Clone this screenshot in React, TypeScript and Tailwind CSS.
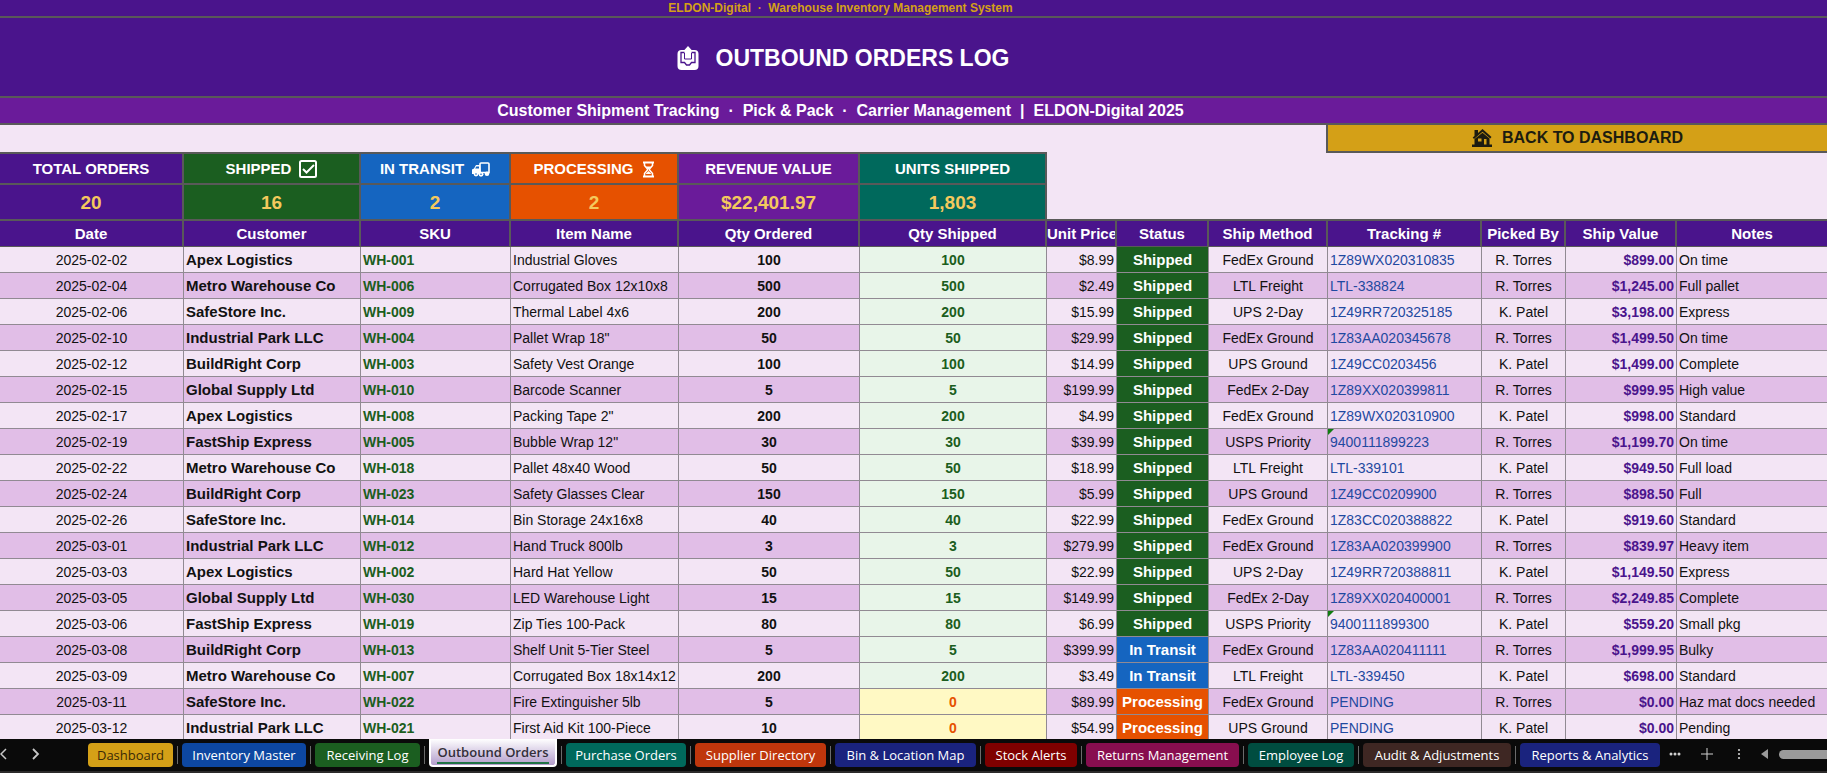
import type { ReactNode } from 'react';

type Order = [string, string, string, string, string, string, string, string, string, string, string, string, string];

const orders: Order[] = [
  ['2025-02-02', 'Apex Logistics', 'WH-001', 'Industrial Gloves', '100', '100', '$8.99', 'Shipped', 'FedEx Ground', '1Z89WX020310835', 'R. Torres', '$899.00', 'On time'],
  ['2025-02-04', 'Metro Warehouse Co', 'WH-006', 'Corrugated Box 12x10x8', '500', '500', '$2.49', 'Shipped', 'LTL Freight', 'LTL-338824', 'R. Torres', '$1,245.00', 'Full pallet'],
  ['2025-02-06', 'SafeStore Inc.', 'WH-009', 'Thermal Label 4x6', '200', '200', '$15.99', 'Shipped', 'UPS 2-Day', '1Z49RR720325185', 'K. Patel', '$3,198.00', 'Express'],
  ['2025-02-10', 'Industrial Park LLC', 'WH-004', 'Pallet Wrap 18"', '50', '50', '$29.99', 'Shipped', 'FedEx Ground', '1Z83AA020345678', 'R. Torres', '$1,499.50', 'On time'],
  ['2025-02-12', 'BuildRight Corp', 'WH-003', 'Safety Vest Orange', '100', '100', '$14.99', 'Shipped', 'UPS Ground', '1Z49CC0203456', 'K. Patel', '$1,499.00', 'Complete'],
  ['2025-02-15', 'Global Supply Ltd', 'WH-010', 'Barcode Scanner', '5', '5', '$199.99', 'Shipped', 'FedEx 2-Day', '1Z89XX020399811', 'R. Torres', '$999.95', 'High value'],
  ['2025-02-17', 'Apex Logistics', 'WH-008', 'Packing Tape 2"', '200', '200', '$4.99', 'Shipped', 'FedEx Ground', '1Z89WX020310900', 'K. Patel', '$998.00', 'Standard'],
  ['2025-02-19', 'FastShip Express', 'WH-005', 'Bubble Wrap 12"', '30', '30', '$39.99', 'Shipped', 'USPS Priority', '9400111899223', 'R. Torres', '$1,199.70', 'On time'],
  ['2025-02-22', 'Metro Warehouse Co', 'WH-018', 'Pallet 48x40 Wood', '50', '50', '$18.99', 'Shipped', 'LTL Freight', 'LTL-339101', 'K. Patel', '$949.50', 'Full load'],
  ['2025-02-24', 'BuildRight Corp', 'WH-023', 'Safety Glasses Clear', '150', '150', '$5.99', 'Shipped', 'UPS Ground', '1Z49CC0209900', 'R. Torres', '$898.50', 'Full'],
  ['2025-02-26', 'SafeStore Inc.', 'WH-014', 'Bin Storage 24x16x8', '40', '40', '$22.99', 'Shipped', 'FedEx Ground', '1Z83CC020388822', 'K. Patel', '$919.60', 'Standard'],
  ['2025-03-01', 'Industrial Park LLC', 'WH-012', 'Hand Truck 800lb', '3', '3', '$279.99', 'Shipped', 'FedEx Ground', '1Z83AA020399900', 'R. Torres', '$839.97', 'Heavy item'],
  ['2025-03-03', 'Apex Logistics', 'WH-002', 'Hard Hat Yellow', '50', '50', '$22.99', 'Shipped', 'UPS 2-Day', '1Z49RR720388811', 'K. Patel', '$1,149.50', 'Express'],
  ['2025-03-05', 'Global Supply Ltd', 'WH-030', 'LED Warehouse Light', '15', '15', '$149.99', 'Shipped', 'FedEx 2-Day', '1Z89XX020400001', 'R. Torres', '$2,249.85', 'Complete'],
  ['2025-03-06', 'FastShip Express', 'WH-019', 'Zip Ties 100-Pack', '80', '80', '$6.99', 'Shipped', 'USPS Priority', '9400111899300', 'K. Patel', '$559.20', 'Small pkg'],
  ['2025-03-08', 'BuildRight Corp', 'WH-013', 'Shelf Unit 5-Tier Steel', '5', '5', '$399.99', 'In Transit', 'FedEx Ground', '1Z83AA020411111', 'R. Torres', '$1,999.95', 'Bulky'],
  ['2025-03-09', 'Metro Warehouse Co', 'WH-007', 'Corrugated Box 18x14x12', '200', '200', '$3.49', 'In Transit', 'LTL Freight', 'LTL-339450', 'K. Patel', '$698.00', 'Standard'],
  ['2025-03-11', 'SafeStore Inc.', 'WH-022', 'Fire Extinguisher 5lb', '5', '0', '$89.99', 'Processing', 'FedEx Ground', 'PENDING', 'R. Torres', '$0.00', 'Haz mat docs needed'],
  ['2025-03-12', 'Industrial Park LLC', 'WH-021', 'First Aid Kit 100-Piece', '10', '0', '$54.99', 'Processing', 'UPS Ground', 'PENDING', 'K. Patel', '$0.00', 'Pending'],
];

const headers = ['Date', 'Customer', 'SKU', 'Item Name', 'Qty Ordered', 'Qty Shipped', 'Unit Price', 'Status', 'Ship Method', 'Tracking #', 'Picked By', 'Ship Value', 'Notes'];

const columnWidths = ['w-[184px]', 'w-[177px]', 'w-[150px]', 'w-[168px]', 'w-[181px]', 'w-[187px]', 'w-[70px]', 'w-[92px]', 'w-[119px]', 'w-[154px]', 'w-[84px]', 'w-[111px]', ''];

const cellStyles = [
  'text-center text-sm',
  'text-[15px] font-bold',
  'text-sm font-bold text-[#1b5e20]',
  'text-sm',
  'text-center text-sm font-bold',
  'text-center text-sm font-bold',
  'text-right text-sm',
  'text-center text-[15px] font-bold text-white',
  'text-center text-sm',
  'text-sm text-[#1f49a0]',
  'text-center text-sm',
  'text-right text-sm font-bold text-[#4a148c]',
  'text-sm',
];

const statusColors: Record<string, string> = {
  Shipped: 'bg-[#1b5e20]',
  'In Transit': 'bg-[#1565c0]',
  Processing: 'bg-[#e65100]',
};

function OutboxIcon() {
  return (
    <svg viewBox="0 0 24 26" className="h-[26px] w-6" aria-hidden="true">
      <rect x="1.500" y="5" width="21" height="20" rx="4" fill="#fff" />
      <path d="M8.500 7.500H5V17.500h3.500l2 2.500h3l2-2.500H19V7.500h-3.500" fill="none" stroke="#4a148c" strokeWidth="1.300" />
      <path d="M12 1l4.500 5h-2.300V12H9.800V6H7.500z" fill="#fff" />
      <path d="M8.500 8v6h7V8" fill="none" stroke="#4a148c" strokeWidth="1" />
    </svg>
  );
}

function CheckIcon() {
  return (
    <svg viewBox="0 0 18 18" className="h-[18px] w-[18px]" fill="none" stroke="#fff" strokeWidth="2" aria-hidden="true">
      <rect x="1" y="1" width="16" height="16" rx="1.500" />
      <path d="M4 9l3.500 3.500L15 5" />
    </svg>
  );
}

function TruckIcon() {
  return (
    <svg viewBox="0 0 18 15" className="h-[15px] w-[18px]" aria-hidden="true">
      <path d="M8 1.800Q8 1 9 1h7q1 0 1 1v8.500H8z" fill="none" stroke="#fff" strokeWidth="1.600" />
      <path d="M8 3H4L2 6.500 0 7.500v4.500h9z" fill="#fff" />
      <path d="M4.300 4.600H7v2H3.200z" fill="#1565c0" />
      <circle cx="4" cy="12" r="2.400" fill="#fff" />
      <circle cx="9" cy="12.300" r="2.400" fill="#fff" />
      <circle cx="15" cy="11.800" r="2.300" fill="#fff" />
      <circle cx="4" cy="12" r=".8" fill="#1565c0" />
      <circle cx="9" cy="12.300" r=".8" fill="#1565c0" />
    </svg>
  );
}

function HourglassIcon() {
  return (
    <svg viewBox="0 0 13 17" className="h-[17px] w-[13px]" aria-hidden="true">
      <path d="M1 1.500h11M1 15.500h11" stroke="#fff" strokeWidth="2" />
      <path d="M2.500 1v3.500L5.500 8v1L2.500 12.500V16M10.500 1v3.500L7.500 8v1l3 3.500V16" fill="none" stroke="#fff" strokeWidth="1.500" />
      <path d="M4 5.500h5L6.500 8.500zM6.500 10L9 12.500V13H4v-.5z" fill="#fff" />
    </svg>
  );
}

function HouseIcon() {
  return (
    <svg viewBox="0 0 20 18" className="h-[18px] w-5" fill="#1c1c10" aria-hidden="true">
      <path d="M2.500 1h3.500v3L10.500 0 19.500 8l-1.300 1.400L10.500 2.800 2 10 .7 8.600l1.800-1.600z" />
      <path fillRule="evenodd" d="M2.500 10L10.500 3.800 17.500 9.500V15.500H20V18H0v-2.500h2.500zM6 9.500v3h3.500v-3zM12 10v5.500h2.500V10z" />
    </svg>
  );
}

type Metric = { label: string; value: string; color: string; width: string; icon?: ReactNode };

const metrics: Metric[] = [
  { label: 'TOTAL ORDERS', value: '20', color: 'bg-[#4a148c]', width: 'w-[184px]' },
  { label: 'SHIPPED', value: '16', color: 'bg-[#1b5e20]', width: 'w-[177px]', icon: <CheckIcon /> },
  { label: 'IN TRANSIT', value: '2', color: 'bg-[#1565c0]', width: 'w-[150px]', icon: <TruckIcon /> },
  { label: 'PROCESSING', value: '2', color: 'bg-[#e65100]', width: 'w-[168px]', icon: <HourglassIcon /> },
  { label: 'REVENUE VALUE', value: '$22,401.97', color: 'bg-[#6a1b9a]', width: 'w-[181px]' },
  { label: 'UNITS SHIPPED', value: '1,803', color: 'bg-[#00695c]', width: 'w-[187px]' },
];

const tabs = [
  { name: 'Dashboard', style: 'w-[85px] bg-[#d4a017] text-[#3b2a06]' },
  { name: 'Inventory Master', style: 'w-[124px] bg-[#0d47a1] text-white' },
  { name: 'Receiving Log', style: 'w-[105px] bg-[#1b5e20] text-white' },
  { name: 'Outbound Orders', style: 'w-[128px]' },
  { name: 'Purchase Orders', style: 'w-[120px] bg-[#00695c] text-white' },
  { name: 'Supplier Directory', style: 'w-[131px] bg-[#bf360c] text-white' },
  { name: 'Bin & Location Map', style: 'w-[141px] bg-[#1a237e] text-white' },
  { name: 'Stock Alerts', style: 'w-[92px] bg-[#7f0000] text-white' },
  { name: 'Returns Management', style: 'w-[153px] bg-[#880e4f] text-white' },
  { name: 'Employee Log', style: 'w-[106px] bg-[#004d40] text-white' },
  { name: 'Audit & Adjustments', style: 'w-[148px] bg-[#3e2723] text-white' },
  { name: 'Reports & Analytics', style: 'w-[140px] bg-[#1a237e] text-white' },
];

function cellBackground(order: Order, column: number, striped: boolean) {
  if (column === 5) return order[5] === '0' ? 'bg-[#fff9c4] text-[#e65100]' : 'bg-[#e8f5e9] text-[#1b5e20]';
  if (column === 7) return statusColors[order[7]];
  return striped ? 'bg-[#e1bee7]' : 'bg-[#f3e5f5]';
}

function SheetTabs() {
  return (
    <nav aria-label="Sheets" className="flex h-[34px] shrink-0 items-start overflow-hidden border-b-2 border-[#2c2a2a] bg-[#0a0a0a] font-['Open_Sans','Noto_Sans',sans-serif] text-[13px]">
      <div className="flex h-[30px] w-[88px] shrink-0 items-center gap-6 text-[#c8c8c8]">
        <button aria-label="Previous sheet" className="w-2">
          <svg viewBox="0 0 8 12" className="h-3 w-2" fill="none" stroke="currentColor" strokeWidth="1.500"><path d="M6 1L1 6l5 5" /></svg>
        </button>
        <button aria-label="Next sheet" className="w-2">
          <svg viewBox="0 0 8 12" className="h-3 w-2" fill="none" stroke="currentColor" strokeWidth="1.800"><path d="M1 1l5 5-5 5" /></svg>
        </button>
      </div>
      {tabs.map((tab, i) => (
        <div key={tab.name} className="flex shrink-0 items-start">
          {i > 0 && <span className="mx-1 mt-[7px] h-[18px] w-px bg-[#6b6b6b]" />}
          {tab.name === 'Outbound Orders' ? (
            <button aria-current="page" className={`${tab.style} flex h-7 items-start justify-center rounded-b border-2 border-t-0 border-white bg-linear-to-b from-white to-[#b39dcb] pt-[3px] font-semibold text-[#33303a]`}>
              <span className="border-b-2 border-[#217346] leading-5 whitespace-nowrap">{tab.name}</span>
            </button>
          ) : (
            <button className={`${tab.style} mt-1 h-6 rounded text-center leading-6 whitespace-nowrap`}>{tab.name}</button>
          )}
        </div>
      ))}
      <div className="flex h-[30px] min-w-0 flex-1 items-center pl-[9px] text-[#d0d0d0]">
        <button aria-label="More sheets" className="w-3">
          <svg viewBox="0 0 12 4" className="h-1 w-3" fill="currentColor"><circle cx="2" cy="2" r="1.500" /><circle cx="6" cy="2" r="1.500" /><circle cx="10" cy="2" r="1.500" /></svg>
        </button>
        <button aria-label="New sheet" className="ml-5 w-3">
          <svg viewBox="0 0 12 12" className="size-3" stroke="currentColor"><path d="M6 0v12M0 6h12" /></svg>
        </button>
        <button aria-label="Sheet options" className="ml-6 w-1">
          <svg viewBox="0 0 4 12" className="h-3 w-1" fill="currentColor"><circle cx="2" cy="2" r="1.100" /><circle cx="2" cy="6" r="1.100" /><circle cx="2" cy="10" r="1.100" /></svg>
        </button>
        <button aria-label="Scroll left" className="ml-5 w-2">
          <svg viewBox="0 0 8 10" className="h-2.5 w-2" fill="#9a9a9a"><path d="M7 0v10L0 5z" /></svg>
        </button>
        <div className="ml-2.5 h-[9px] flex-1 rounded-l-full bg-[#9a9a9a]" />
      </div>
    </nav>
  );
}

export default function App() {
  return (
    <div className="flex h-screen flex-col overflow-hidden bg-[#f3e5f5] font-['Liberation_Sans',Arial,sans-serif] text-[#111]">
      <main className="min-h-0 flex-1 overflow-hidden">
        <header className="text-center font-bold text-white">
          <p className="h-[18px] border-b-2 border-[#595959] bg-[#4a148c] pr-[146px] text-xs leading-4 whitespace-pre text-[#d4a017]">ELDON-Digital  ·  Warehouse Inventory Management System</p>
          <h1 className="flex h-20 items-center justify-center gap-4 border-b-2 border-[#595959] bg-[#4a148c] pt-[2px] pr-[142px] text-[23px]">
            <OutboxIcon />
            OUTBOUND ORDERS LOG
          </h1>
          <p className="h-[27px] border-b-2 border-[#595959] bg-[#6a1b9a] pr-[146px] text-base leading-[26px] whitespace-pre">Customer Shipment Tracking  ·  Pick &amp; Pack  ·  Carrier Management  |  ELDON-Digital 2025</p>
        </header>
        <section className="flex h-[94px] items-start justify-between" aria-label="Summary">
          <dl className="mt-[27px] flex shrink-0 border-t-2 border-[#595959] text-center font-bold">
            {metrics.map((metric) => (
              <div key={metric.label} className={`${metric.width} ${metric.color} border-r-2 border-[#595959]`}>
                <dt className="flex h-[31px] items-center justify-center gap-2 border-b-2 border-[#595959] pt-px text-[15px] text-white">
                  {metric.label}
                  {metric.icon}
                </dt>
                <dd className="h-[34px] text-[19px] leading-[35px] text-[#f4c95d]">{metric.value}</dd>
              </div>
            ))}
          </dl>
          <a href="#dashboard" className="flex h-7 w-[501px] items-center justify-center gap-2.5 border-b-2 border-l-2 border-[#595959] bg-[#d4a017] text-base font-bold text-[#1c1c10]">
            <HouseIcon />
            BACK TO DASHBOARD
          </a>
        </section>
        <table className="w-full table-fixed border-separate border-spacing-0">
          <colgroup>
            {columnWidths.map((width, i) => <col key={i} className={width} />)}
          </colgroup>
          <thead>
            <tr>
              {headers.map((header, i) => (
                <th key={header} className={`h-7 overflow-hidden border-t-2 border-b border-[#595959] bg-[#4a148c] p-0 text-center text-[15px] leading-[25px] font-bold whitespace-nowrap text-white ${i < 12 ? 'border-r-2' : ''}`}>{header}</th>
              ))}
            </tr>
          </thead>
          <tbody>
            {orders.map((order, row) => (
              <tr key={row}>
                {order.map((value, column) => (
                  <td key={column} className={`h-[26px] overflow-hidden border-b border-[#918a93] px-[2px] pt-px pb-0 leading-6 whitespace-nowrap ${column < 12 ? 'border-r' : ''} ${cellStyles[column]} ${cellBackground(order, column, row % 2 === 1)}`}>
                    {column === 9 && value.startsWith('9400') ? (
                      <span className="relative block">
                        <svg viewBox="0 0 6 6" className="absolute -top-px -left-[2px] size-1.5" aria-hidden="true"><path d="M0 0h6L0 6z" fill="#107c10" /></svg>
                        {value}
                      </span>
                    ) : value}
                  </td>
                ))}
              </tr>
            ))}
          </tbody>
        </table>
      </main>
      <SheetTabs />
    </div>
  );
}
